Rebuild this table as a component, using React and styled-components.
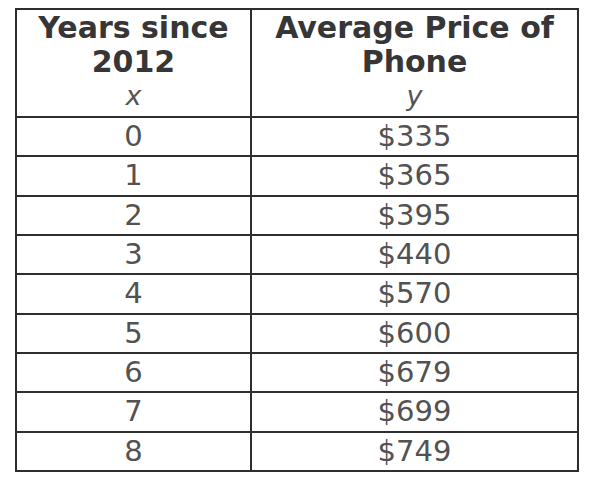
import React from "react"
import styled, { createGlobalStyle } from "styled-components"

const GlobalStyle = createGlobalStyle`
  body {
    margin: 0;
    background: #ffffff;
    font-family: "DejaVu Sans", Verdana, sans-serif;
  }
`

const Page = styled.div`
  padding: 8px 0 0 15px;
`

const Table = styled.table`
  border-collapse: collapse;
  width: 563px;
  table-layout: fixed;
  border: 2px solid #2e2e2e;
`

const HeadCell = styled.th`
  width: ${props => props.width}px;
  padding: 1px 0 3px;
  border: 2px solid #2e2e2e;
  text-align: center;
  vertical-align: top;
  font-size: 30px;
  line-height: 34px;
  font-weight: bold;
  color: #363636;
`

const Variable = styled.div`
  font-size: 27px;
  font-weight: normal;
  font-style: italic;
  color: #555555;
`

const Cell = styled.td`
  height: 37.33px;
  padding: 0;
  border: 2px solid #2e2e2e;
  text-align: center;
  vertical-align: middle;
  font-size: 29px;
  line-height: 37px;
  color: #525252;
`

const rows = [
  { x: 0, y: "$335" },
  { x: 1, y: "$365" },
  { x: 2, y: "$395" },
  { x: 3, y: "$440" },
  { x: 4, y: "$570" },
  { x: 5, y: "$600" },
  { x: 6, y: "$679" },
  { x: 7, y: "$699" },
  { x: 8, y: "$749" },
]

const App = () => (
  <Page>
    <GlobalStyle />
    <Table>
      <thead>
        <tr>
          <HeadCell width={233}>
            Years since
            <br />
            2012
            <Variable>x</Variable>
          </HeadCell>
          <HeadCell width={325}>
            Average Price of
            <br />
            Phone
            <Variable>y</Variable>
          </HeadCell>
        </tr>
      </thead>
      <tbody>
        {rows.map(row =>
          <tr key={row.x}>
            <Cell>{row.x}</Cell>
            <Cell>{row.y}</Cell>
          </tr>,
        )}
      </tbody>
    </Table>
  </Page>
)

export default App
